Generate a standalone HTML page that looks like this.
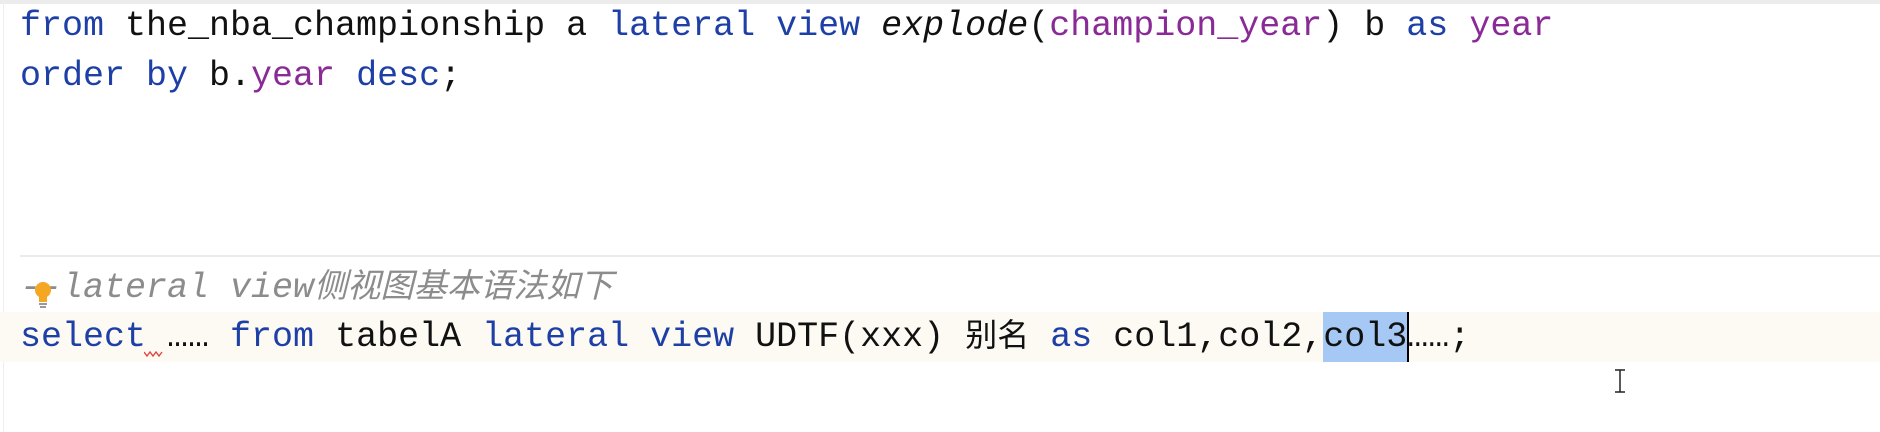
<html><head><style>
body{margin:0;width:1880px;height:432px;background:#fff;position:relative;overflow:hidden;font-family:"Liberation Mono","Noto Sans CJK SC",monospace;font-size:35px;}
.l{position:absolute;left:20px;white-space:pre;line-height:40px;color:#111;}
.k{color:#1d3fa6}.p{color:#8a2a96}.i{font-style:italic}.c{color:#8c8c8c;font-style:italic}
.z{font-size:32px}
.sel{background:#a6c8f5;display:inline-block;line-height:50px;height:50px;vertical-align:top;margin-top:-5px;border-right:2px solid #000;margin-right:-2px}
</style></head><body>
<div style="position:absolute;left:0;top:0;width:1880px;height:4px;background:#ececec"></div>
<div style="position:absolute;left:3px;top:0;width:1px;height:432px;background:#eee"></div>
<div style="position:absolute;left:20px;top:255px;width:1860px;height:2px;background:#ebebeb"></div>
<div style="position:absolute;left:0;top:312px;width:1880px;height:50px;background:#fcfaf2"></div>
<div class="l" style="top:6px"><span class="k">from</span> the_nba_championship a <span class="k">lateral view</span> <span class="i">explode</span>(<span class="p">champion_year</span>) b <span class="k">as</span> <span class="p">year</span></div>
<div class="l" style="top:56px"><span class="k">order by</span> b.<span class="p">year</span> <span class="k">desc</span>;</div>
<div class="l c" style="top:268px">--lateral view<span style="font-size:33.2px">侧视图基本语法如下</span></div>
<div class="l" style="top:317px"><span class="k">select</span> …… <span class="k">from</span> tabelA <span class="k">lateral view</span> UDTF(xxx) <span class="z">别名</span> <span class="k">as</span> col1,col2,<span class="sel">col3</span>……;</div>
<svg style="position:absolute;left:30px;top:280px" width="26" height="30"><circle cx="13" cy="10" r="8" fill="#f5a623"/><rect x="9" y="17" width="8" height="5" fill="#f5a623"/><rect x="9" y="23" width="8" height="2" fill="#999"/><rect x="10" y="26" width="6" height="2" fill="#999"/></svg>
<svg style="position:absolute;left:144px;top:350px" width="20" height="8"><polyline points="0,2 3,6 6,2 9,6 12,2 15,6 18,2" fill="none" stroke="#e04040" stroke-width="1.3"/></svg>
<svg style="position:absolute;left:1612px;top:368px" width="16" height="26"><path d="M3 2h10M8 2v22M3 24h10" stroke="#222" stroke-width="1.5" fill="none"/></svg>
</body></html>
